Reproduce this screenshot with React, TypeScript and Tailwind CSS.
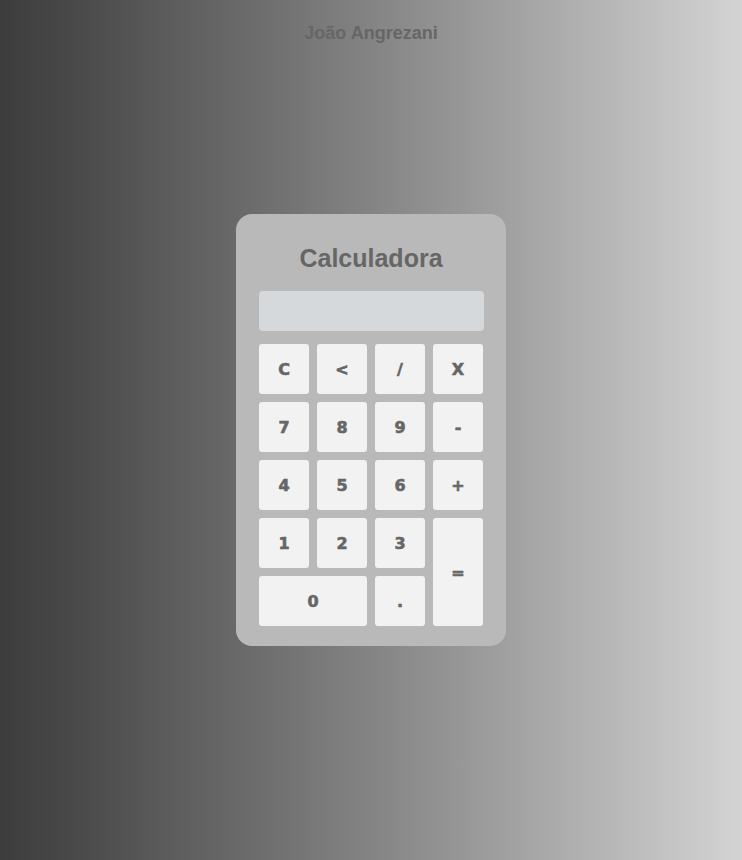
const keys: { label: string; cls?: string }[] = [
  { label: "C" },
  { label: "<" },
  { label: "/" },
  { label: "X" },
  { label: "7" },
  { label: "8" },
  { label: "9" },
  { label: "-" },
  { label: "4" },
  { label: "5" },
  { label: "6" },
  { label: "+" },
  { label: "1" },
  { label: "2" },
  { label: "3" },
  { label: "=", cls: "row-span-2" },
  { label: "0", cls: "col-span-2" },
  { label: "." },
];

export default function App() {
  return (
    <div className="h-[860px] w-full overflow-hidden bg-gradient-to-r from-[#3c3c3c] to-[#d4d4d4] font-['Liberation_Sans',Arial,sans-serif]">
      <header className="pt-[22px] text-center text-[18px] leading-[22px] font-bold text-[#666]">
        João Angrezani
      </header>

      <div className="mx-auto mt-[170px] w-[270px] rounded-[16px] bg-[#b9b9b9] px-[23px] pt-[30px] pb-[20px]">
        <h1 className="mb-[19px] text-center text-[25px] leading-[28px] font-bold text-[#666]">
          Calculadora
        </h1>

        <div className="mb-[13px] h-[40px] w-[225px] rounded-[4px] bg-[#d6d9dc]"></div>

        <div className="grid grid-cols-[repeat(4,50px)] auto-rows-[50px] gap-[8px]">
          {keys.map((k) => (
            <button
              key={k.label}
              className={`${k.cls ?? ""} flex items-center justify-center rounded-[3px] bg-[#f2f2f2] pt-[2px] font-['DejaVu_Sans',Verdana,sans-serif] text-[16px] font-bold text-[#666] [-webkit-text-stroke:0.6px_#666]`}
            >
              {k.label}
            </button>
          ))}
        </div>
      </div>
    </div>
  );
}
